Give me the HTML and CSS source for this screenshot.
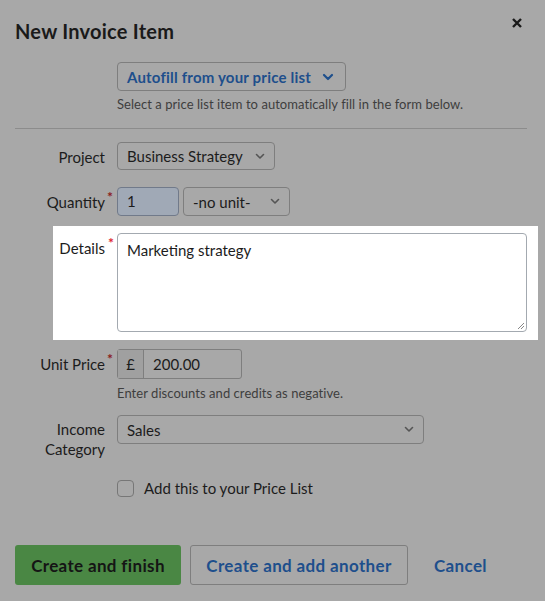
FILE: index.html
```html
<!DOCTYPE html>
<html>
<head>
<meta charset="utf-8">
<link rel="stylesheet" href="styles.css">
</head>
<body>
<div class="modal">
  <div class="header">
    <h1 class="title">New Invoice Item</h1>
    <svg class="close" width="10" height="10" viewBox="0 0 10 10"><path d="M1 1 L9 9 M9 1 L1 9" stroke="#1a1a1a" stroke-width="2.4" stroke-linecap="butt"/></svg>
  </div>

  <div class="autofill-block">
    <div class="autofill-btn">Autofill from your price list
      <svg class="chev-blue" width="12" height="8" viewBox="0 0 12 8"><path d="M2 2 L6 6 L10 2" fill="none" stroke="#1e4f8c" stroke-width="2.2" stroke-linecap="round" stroke-linejoin="round"/></svg>
    </div>
    <div class="help">Select a price list item to automatically fill in the form below.</div>
  </div>

  <div class="divider"></div>

  <div class="row row-project">
    <div class="label">Project</div>
    <div class="field">
      <div class="select sel-project">Business Strategy
        <svg class="chev" width="10" height="7" viewBox="0 0 10 7"><path d="M1.5 1.5 L5 5 L8.5 1.5" fill="none" stroke="#555" stroke-width="1.6" stroke-linecap="round" stroke-linejoin="round"/></svg>
      </div>
    </div>
  </div>

  <div class="row row-qty">
    <div class="label">Quantity<span class="req">*</span></div>
    <div class="field qty-field">
      <div class="input qty-input">1</div>
      <div class="select sel-unit">-no unit-
        <svg class="chev" width="10" height="7" viewBox="0 0 10 7"><path d="M1.5 1.5 L5 5 L8.5 1.5" fill="none" stroke="#555" stroke-width="1.6" stroke-linecap="round" stroke-linejoin="round"/></svg>
      </div>
    </div>
  </div>

  <div class="row row-details">
    <div class="label">Details<span class="req req-bright">*</span></div>
    <div class="field">
      <div class="textarea">Marketing strategy
        <svg class="grip" width="9" height="9" viewBox="0 0 9 9"><path d="M8 2 L2 8 M8 5 L5 8" stroke="#888" stroke-width="1"/></svg>
      </div>
    </div>
  </div>

  <div class="row row-price">
    <div class="label">Unit Price<span class="req">*</span></div>
    <div class="field">
      <div class="price-group">
        <div class="addon">£</div>
        <div class="price-input">200.00</div>
      </div>
      <div class="help help-price">Enter discounts and credits as negative.</div>
    </div>
  </div>

  <div class="row row-income">
    <div class="label label-two">Income<br>Category</div>
    <div class="field">
      <div class="select sel-income">Sales
        <svg class="chev" width="10" height="7" viewBox="0 0 10 7"><path d="M1.5 1.5 L5 5 L8.5 1.5" fill="none" stroke="#555" stroke-width="1.6" stroke-linecap="round" stroke-linejoin="round"/></svg>
      </div>
    </div>
  </div>

  <div class="row row-check">
    <div class="label"></div>
    <div class="field check-field">
      <span class="checkbox"></span>
      <span class="check-label">Add this to your Price List</span>
    </div>
  </div>

  <div class="actions">
    <div class="btn btn-primary">Create and finish</div>
    <div class="btn btn-outline">Create and add another</div>
    <div class="btn btn-link">Cancel</div>
  </div>
</div>
</body>
</html>
```

FILE: styles.css
```css
html, body {
  margin: 0;
  padding: 0;
  background: #a8a8a8;
}
body {
  font-family: Lato, "Open Sans", "Liberation Sans", sans-serif;
  color: #1c1c1c;
  width: 545px;
  height: 601px;
  overflow: hidden;
}
.modal {
  padding: 0 18px 0 15px;
}
.header {
  display: flex;
  justify-content: space-between;
  align-items: flex-start;
  height: 50px;
}
.title {
  margin: 19px 0 0 0;
  font-size: 20px;
  line-height: 24px;
  font-weight: 700;
  letter-spacing: 0.25px;
  color: #1a1a1a;
}
.close {
  margin-top: 18px;
  margin-right: 5px;
}
.autofill-block {
  margin-left: 102px;
  margin-top: 12px;
}
.autofill-btn {
  display: inline-flex;
  align-items: center;
  gap: 11px;
  box-sizing: border-box;
  height: 29px;
  padding: 0 11px 0 9px;
  border: 1px solid #7e7e7e;
  border-radius: 4px;
  font-size: 15px;
  font-weight: 700;
  letter-spacing: 0.2px;
  color: #1e4f8c;
}
.help {
  font-size: 13px;
  color: #3e3e3e;
  margin-top: 5px;
  line-height: 17px;
  letter-spacing: 0.05px;
}
.divider {
  height: 1px;
  background: #8c8c8c;
  margin-top: 15px;
}
.row {
  display: grid;
  grid-template-columns: 90px 1fr;
  column-gap: 12px;
}
.label {
  text-align: right;
  font-size: 15px;
  line-height: 20px;
  padding-top: 5px;
  color: #1c1c1c;
  position: relative;
}
.req {
  position: absolute;
  right: -8px;
  top: 0;
  color: #8a1c1c;
  font-size: 14px;
  font-weight: 700;
}
.req-bright {
  color: #dd2530;
  right: -9px;
}
.row-project { margin-top: 13px; }
.row-qty { margin-top: 17px; }
.select {
  box-sizing: border-box;
  display: flex;
  align-items: center;
  justify-content: space-between;
  border: 1px solid #7e7e7e;
  border-radius: 4px;
  font-size: 15px;
  padding: 0 9px 0 9px;
  color: #1c1c1c;
}
.sel-project { width: 158px; height: 28px; }
.qty-field { display: flex; gap: 5px; }
.input {
  box-sizing: border-box;
  height: 29px;
  border: 1px solid #717a8a;
  border-radius: 4px;
  background: #a0a9b6;
  font-size: 15px;
  line-height: 27px;
  padding-left: 9px;
}
.qty-input { width: 62px; }
.sel-unit { width: 107px; height: 29px; margin-left: -1px; }
.row-details {
  margin: 10px -11px 0 38px;
  padding: 7px 11px 8px 0;
  background: #fff;
  grid-template-columns: 52px 1fr;
}
.textarea {
  box-sizing: border-box;
  height: 99px;
  border: 1px solid #a3a9b0;
  border-radius: 4px;
  font-size: 15px;
  padding: 7px 9px;
  line-height: 18px;
  position: relative;
}
.grip {
  position: absolute;
  right: 1px;
  bottom: 1px;
}
.row-price { margin-top: 9px; }
.price-group {
  display: flex;
  width: 125px;
  height: 30px;
  box-sizing: border-box;
  border: 1px solid #7e7e7e;
  border-radius: 3px;
  font-size: 15px;
}
.addon {
  width: 26px;
  box-sizing: border-box;
  border-right: 1px solid #7e7e7e;
  background: #a0a0a0;
  text-align: center;
  line-height: 28px;
}
.price-input {
  padding-left: 9px;
  line-height: 28px;
}
.help-price { margin-top: 6px; }
.row-income { margin-top: 13px; }
.label-two { padding-top: 4px; line-height: 20px; }
.sel-income { width: 307px; height: 29px; }
.row-check { margin-top: 19px; }
.check-field {
  display: flex;
  align-items: center;
  gap: 10px;
  height: 20px;
}
.checkbox {
  display: inline-block;
  box-sizing: border-box;
  width: 17px;
  height: 17px;
  border: 1px solid #777;
  border-radius: 4px;
}
.check-label { font-size: 15px; }
.actions {
  display: flex;
  align-items: center;
  margin-top: 47px;
}
.btn {
  box-sizing: border-box;
  height: 40px;
  display: flex;
  align-items: center;
  justify-content: center;
  font-size: 17px;
  font-weight: 700;
  letter-spacing: 0.35px;
  border-radius: 3px;
}
.btn-primary {
  width: 166px;
  background: #4a8744;
  color: #151515;
}
.btn-outline {
  width: 218px;
  margin-left: 9px;
  border: 1px solid #7e7e7e;
  color: #1e4f8c;
}
.btn-link {
  margin-left: 26px;
  color: #1e4f8c;
}
```
